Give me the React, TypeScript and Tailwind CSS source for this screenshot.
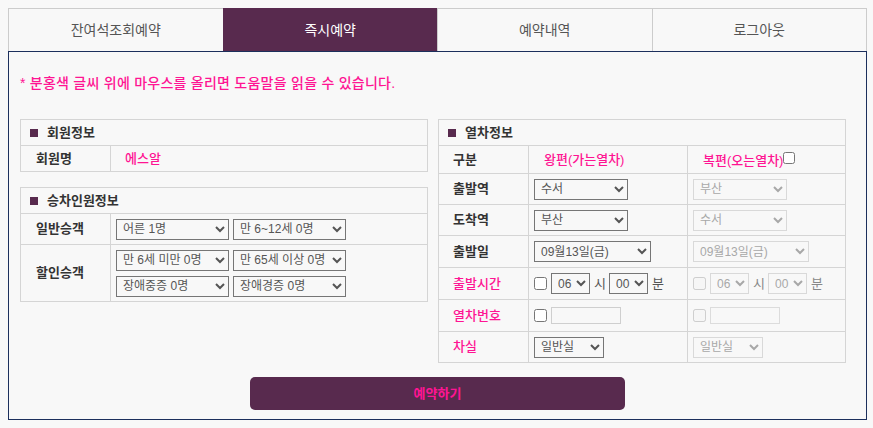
import React from "react";

const tabs = ["잔여석조회예약", "즉시예약", "예약내역", "로그아웃"];

function Sel({ value, w, off }: { value: string; w: string; off?: boolean }) {
  return (
    <select
      disabled={off}
      defaultValue={value}
      className={`${w} h-[21px] border text-[12px] pl-[2px] ${
        off ? "border-[#d9d9d9] text-[#a8a8a8]" : "border-[#767676] text-[#555]"
      }`}
    >
      <option>{value}</option>
    </select>
  );
}

function BoxHead({ title }: { title: string }) {
  return (
    <div className="h-[26px] flex items-center border-b border-[#d5d5d5] pl-[9px] gap-[9px]">
      <span className="w-[8px] h-[8px] bg-[#582a4e]" />
      <span className="text-[13px] font-bold text-[#333] leading-none">{title}</span>
    </div>
  );
}

function Row({
  label,
  pink,
  h,
  a,
  b,
  last,
}: {
  label: string;
  pink?: boolean;
  h: string;
  a: React.ReactNode;
  b: React.ReactNode;
  last?: boolean;
}) {
  return (
    <div className={`flex ${h} ${last ? "" : "border-b"} border-[#d5d5d5]`}>
      <div
        className={`w-[90px] border-r border-[#d5d5d5] flex items-center pl-[14px] text-[13px] ${
          pink ? "text-[#ff1493] font-medium" : "font-bold text-[#333]"
        }`}
      >
        {label}
      </div>
      <div className="w-[159px] border-r border-[#d5d5d5] flex items-center pl-[5px]">{a}</div>
      <div className="flex-1 flex items-center pl-[5px]">{b}</div>
    </div>
  );
}

function Chk({ off }: { off?: boolean }) {
  return <input type="checkbox" disabled={off} className="m-0 w-[13px] h-[13px]" />;
}

function Time({ off }: { off?: boolean }) {
  const t = off ? "text-[#888]" : "text-[#555]";
  return (
    <div className={`flex items-center text-[13px] ${t}`}>
      <Chk off={off} />
      <span className="ml-[4px]">
        <Sel value="06" w="w-[39px]" off={off} />
      </span>
      <span className="ml-[4px] mr-[3px]">시</span>
      <Sel value="00" w="w-[39px]" off={off} />
      <span className="ml-[4px]">분</span>
    </div>
  );
}

function TrainNo({ off }: { off?: boolean }) {
  return (
    <div className="flex items-center">
      <Chk off={off} />
      <input
        disabled={off}
        className={`ml-[4px] w-[70px] h-[17px] border ${off ? "border-[#dcdcdc]" : "border-[#cfcfcf]"}`}
      />
    </div>
  );
}

export default function App() {
  return (
    <div className="w-[873px] h-[428px] bg-[#f8f8f8] pt-2 pl-2 font-[family-name:Liberation_Sans,Noto_Sans_CJK_KR,sans-serif]">
      <div className="w-[859px]">
        <div className="flex h-[43px]">
          {tabs.map((t, i) => (
            <div
              key={t}
              className={`flex-1 flex items-center justify-center text-[14px] border-t border-l ${
                i === 3 ? "border-r" : ""
              } ${i === 1 ? "bg-[#582a4e] text-white border-[#582a4e]" : "border-[#cccccc] text-[#555]"}`}
            >
              {t}
            </div>
          ))}
        </div>

        <div className="h-[369px] border border-[#1c2f5c] pl-[11px]">
          <p className="mt-[22px] text-[14px] leading-[18px] tracking-[0.25px] text-[#ff1493] font-medium">
            * 분홍색 글씨 위에 마우스를 올리면 도움말을 읽을 수 있습니다.
          </p>

          <div className="flex gap-[10px] mt-[27px]">
            <div className="w-[408px]">
              <div className="border border-[#d5d5d5]">
                <BoxHead title="회원정보" />
                <div className="flex h-[25px]">
                  <div className="w-[90px] border-r border-[#d5d5d5] flex items-center pl-[15px] text-[13px] font-bold text-[#333]">
                    회원명
                  </div>
                  <div className="flex items-center pl-[14px] text-[13px] font-medium text-[#ff1493]">에스알</div>
                </div>
              </div>

              <div className="border border-[#d5d5d5] mt-[15px]">
                <BoxHead title="승차인원정보" />
                <div className="flex h-[31px] border-b border-[#d5d5d5]">
                  <div className="w-[90px] border-r border-[#d5d5d5] flex items-center pl-[15px] text-[13px] font-bold text-[#333]">
                    일반승객
                  </div>
                  <div className="flex items-center gap-[4px] pl-[5px]">
                    <Sel value="어른 1명" w="w-[113px]" />
                    <Sel value="만 6~12세 0명" w="w-[113px]" />
                  </div>
                </div>
                <div className="flex h-[56px]">
                  <div className="w-[90px] border-r border-[#d5d5d5] flex items-center pl-[15px] text-[13px] font-bold text-[#333]">
                    할인승객
                  </div>
                  <div className="flex flex-col justify-center gap-[5px] pl-[5px]">
                    <div className="flex gap-[4px]">
                      <Sel value="만 6세 미만 0명" w="w-[113px]" />
                      <Sel value="만 65세 이상 0명" w="w-[113px]" />
                    </div>
                    <div className="flex gap-[4px]">
                      <Sel value="장애중증 0명" w="w-[113px]" />
                      <Sel value="장애경증 0명" w="w-[113px]" />
                    </div>
                  </div>
                </div>
              </div>
            </div>

            <div className="w-[408px] border border-[#d5d5d5]">
              <BoxHead title="열차정보" />
              <div className="flex h-[28px] border-b border-[#d5d5d5]">
                <div className="w-[90px] border-r border-[#d5d5d5] flex items-center pl-[14px] text-[13px] font-bold text-[#333]">
                  구분
                </div>
                <div className="w-[159px] border-r border-[#d5d5d5] flex items-center pl-[15px] text-[13px] font-medium text-[#ff1493]">
                  왕편(가는열차)
                </div>
                <div className="flex-1 flex items-start pt-[5px] pl-[15px] text-[13px] font-medium text-[#ff1493]">
                  <span>복편(오는열차)</span>
                  <input type="checkbox" className="m-0 mt-[1px] w-[12px] h-[12px]" />
                </div>
              </div>
              <Row label="출발역" h="h-[31px]" a={<Sel value="수서" w="w-[94px]" />} b={<Sel value="부산" w="w-[94px]" off />} />
              <Row label="도착역" h="h-[31px]" a={<Sel value="부산" w="w-[94px]" />} b={<Sel value="수서" w="w-[94px]" off />} />
              <Row
                label="출발일"
                h="h-[32px]"
                a={<Sel value="09월13일(금)" w="w-[117px]" />}
                b={<Sel value="09월13일(금)" w="w-[116px]" off />}
              />
              <Row label="출발시간" pink h="h-[32px]" a={<Time />} b={<Time off />} />
              <Row label="열차번호" pink h="h-[32px]" a={<TrainNo />} b={<TrainNo off />} />
              <Row
                label="차실"
                pink
                last
                h="h-[30px]"
                a={<Sel value="일반실" w="w-[70px]" />}
                b={<Sel value="일반실" w="w-[70px]" off />}
              />
            </div>
          </div>

          <div className="flex justify-center pr-[11px] mt-[14px]">
            <button className="w-[375px] h-[33px] rounded-[5px] bg-[#582a4e] text-[13px] font-bold text-[#ff1493]">
              예약하기
            </button>
          </div>
        </div>
      </div>
    </div>
  );
}
